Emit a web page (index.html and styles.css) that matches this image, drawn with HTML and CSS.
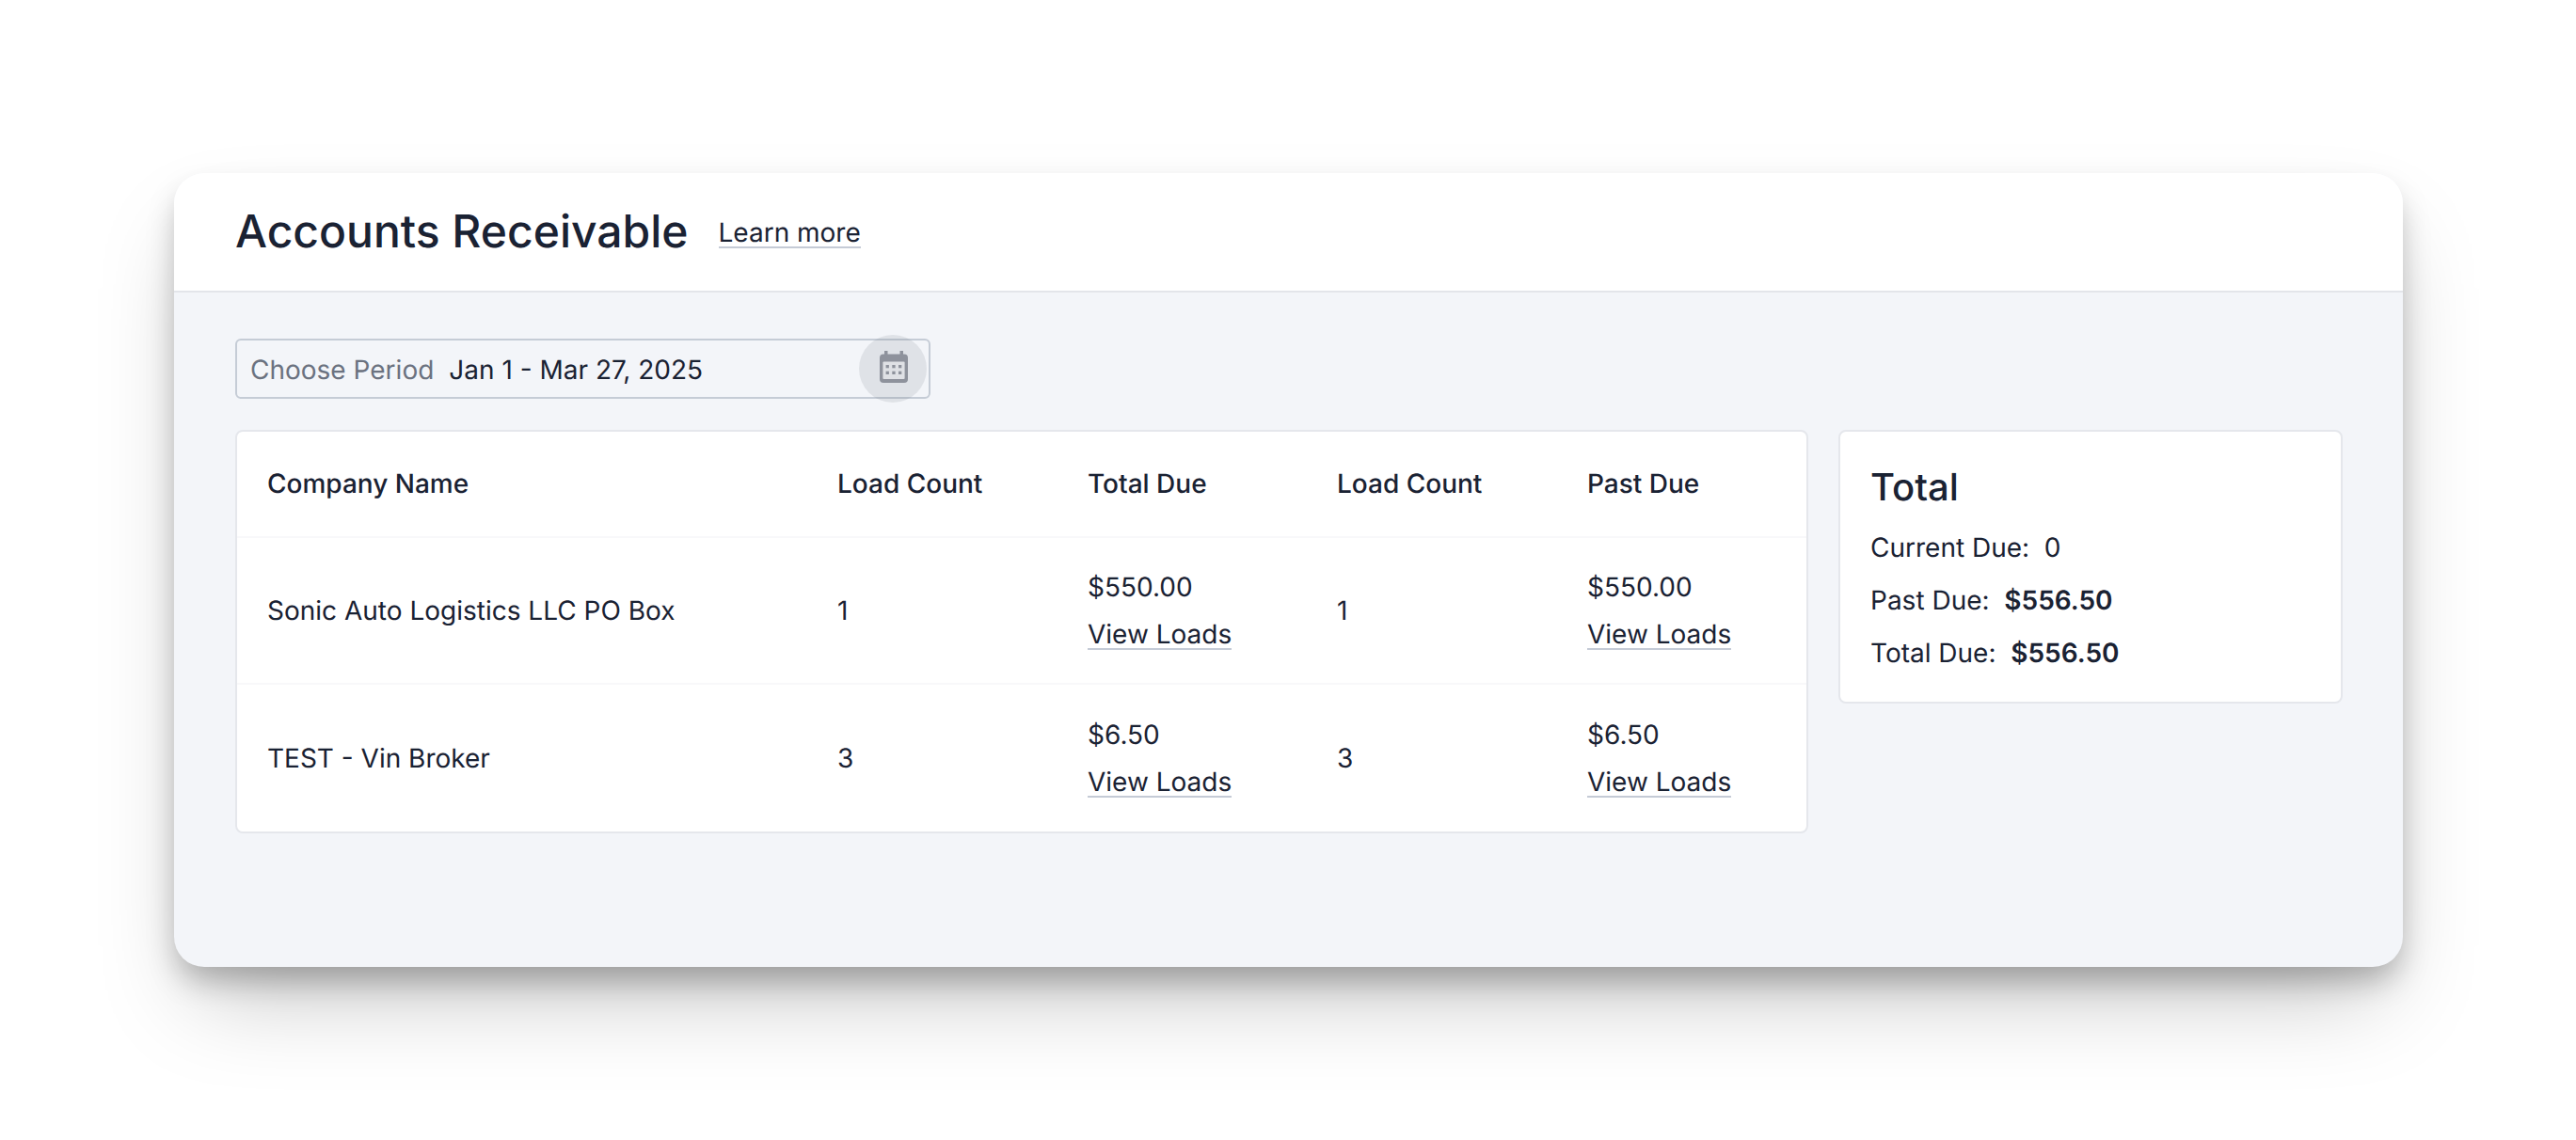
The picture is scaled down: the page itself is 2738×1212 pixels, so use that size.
FILE: index.html
```html
<!DOCTYPE html>
<html lang="en">
<head>
    <meta charset="UTF-8">
    <title>Accounts Receivable</title>
    <link rel="stylesheet" href="styles.css">
</head>
<body>
<div class="frame">
    <!-- header -->
    <div class="head">
        <h1 class="title">Accounts Receivable</h1>
        <a class="link learn">Learn more</a>
    </div>
    <div class="content">
        <!-- period picker -->
        <div class="period">
            <span class="period_label">Choose Period</span>
            <span class="period_value">Jan 1 - Mar 27, 2025</span>
            <span class="period_btn">
                <svg class="period_icon" width="30" height="34" viewBox="0 0 30 34">
                    <rect x="5" y="0" width="3.5" height="6" fill="#8e929c"/>
                    <rect x="21.5" y="0" width="3.5" height="6" fill="#8e929c"/>
                    <rect x="0" y="3.5" width="30" height="30.5" rx="4" fill="#8e929c"/>
                    <rect x="3.4" y="11.5" width="23.2" height="18.5" rx="1" fill="#dfe1e5"/>
                    <g fill="#8e929c">
                        <rect x="6.6" y="15" width="3.3" height="3.3"/>
                        <rect x="13.3" y="15" width="3.3" height="3.3"/>
                        <rect x="20" y="15" width="3.3" height="3.3"/>
                        <rect x="6.6" y="21.7" width="3.3" height="3.3"/>
                        <rect x="13.3" y="21.7" width="3.3" height="3.3"/>
                        <rect x="20" y="21.7" width="3.3" height="3.3"/>
                    </g>
                </svg>
            </span>
        </div>
        <div class="columns">
            <!-- table -->
            <div class="card table_card">
                <table class="list">
                    <thead>
                        <tr>
                            <th class="col_name">Company Name</th>
                            <th class="col_num">Load Count</th>
                            <th class="col_mid">Total Due</th>
                            <th class="col_num">Load Count</th>
                            <th>Past Due</th>
                        </tr>
                    </thead>
                    <tbody>
                        <tr>
                            <td>Sonic Auto Logistics LLC PO Box</td>
                            <td>1</td>
                            <td>$550.00<br><a class="link">View Loads</a></td>
                            <td>1</td>
                            <td>$550.00<br><a class="link">View Loads</a></td>
                        </tr>
                        <tr>
                            <td>TEST - Vin Broker</td>
                            <td>3</td>
                            <td>$6.50<br><a class="link">View Loads</a></td>
                            <td>3</td>
                            <td>$6.50<br><a class="link">View Loads</a></td>
                        </tr>
                    </tbody>
                </table>
            </div>
            <!-- totals -->
            <div class="card total_card">
                <h2 class="total_title">Total</h2>
                <p class="total_row">Current Due:&nbsp; 0</p>
                <p class="total_row">Past Due:&nbsp; <b>$556.50</b></p>
                <p class="total_row">Total Due:&nbsp; <b>$556.50</b></p>
            </div>
        </div>
    </div>
</div>
</body>
</html>
```

FILE: styles.css
```css
*{
    margin: 0;
    padding: 0;
    box-sizing: border-box;
}
html, body{
    height: 100%;
    background-color: #fff;
}
body{
    padding: 184px 184px 0 185px;
    font-family: "Inter", "Liberation Sans", sans-serif;
    font-size: 28px;
    line-height: 50px;
    color: #1a2233;
    text-rendering: geometricPrecision;
    overflow: hidden;
}
.frame{
    height: 844px;
    border-radius: 32px;
    background-color: #f3f5f9;
    box-shadow: 0 50px 100px -24px rgba(0, 0, 0, 0.25), 0 18px 32px -4px rgba(0, 0, 0, 0.26);
}
/* header */
.head{
    height: 127px;
    padding: 0 0 2px 65px;
    display: flex;
    align-items: center;
    gap: 32px;
    background-color: #fff;
    border-bottom: 2px solid #e3e5ea;
    border-radius: 32px 32px 0 0;
}
.title{
    font-size: 48px;
    font-weight: 500;
    line-height: 60px;
}
.link{
    display: inline-block;
    line-height: 30px;
    border-bottom: 2px solid #c5cbd6;
}
.learn{
    margin-top: 4px;
}
/* content */
.content{
    padding: 49px 64px 0 65px;
}
.period{
    width: 739px;
    height: 64px;
    padding: 2px 0 0 14px;
    display: flex;
    align-items: center;
    gap: 16px;
    border: 2px solid #c5ccd6;
    border-radius: 6px;
    position: relative;
}
.period_label{
    color: #6b7280;
}
.period_btn{
    width: 72px;
    height: 72px;
    border-radius: 50%;
    background-color: rgba(107, 114, 128, 0.14);
    display: flex;
    align-items: center;
    justify-content: center;
    position: absolute;
    right: 2px;
    top: -6px;
}
.period_icon{
    margin: -4px 0 0 2px;
}
.columns{
    margin-top: 33px;
    display: flex;
    align-items: flex-start;
    gap: 32px;
}
.card{
    background-color: #fff;
    border: 2px solid #e5e7ec;
    border-radius: 8px;
}
.table_card{
    width: 1672px;
    height: 429px;
}
.total_card{
    width: 536px;
    height: 291px;
    padding: 29px 32px;
}
/* table */
.list{
    width: 100%;
    border-collapse: collapse;
    table-layout: fixed;
}
.list th, .list td{
    padding: 0 0 0 32px;
    text-align: left;
}
.list th{
    height: 112px;
    padding-bottom: 1px;
    font-weight: 500;
}
.list td{
    height: 156px;
    border-top: 2px solid #f8f8fa;
}
.list tbody tr:last-child td{
    height: 157px;
    padding-bottom: 1px;
}
.col_name{
    width: 606px;
}
.col_num{
    width: 266px;
}
.col_mid{
    width: 265px;
}
/* totals */
.total_title{
    font-size: 40px;
    font-weight: 500;
    line-height: 60px;
    margin-bottom: 6px;
}
.total_row{
    line-height: 56px;
}
.total_row b{
    font-weight: 600;
}
```
